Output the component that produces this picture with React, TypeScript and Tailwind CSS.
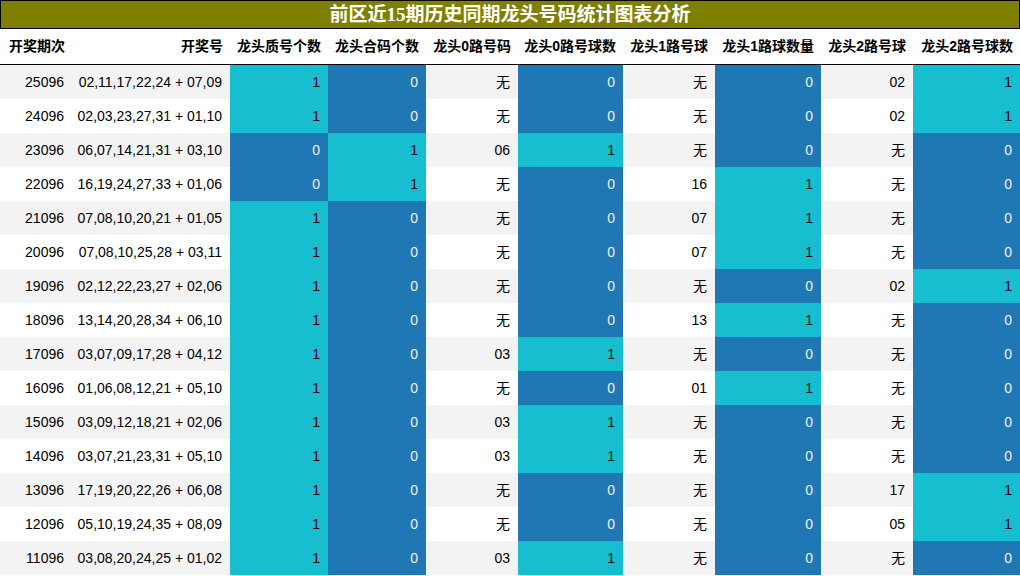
type Row = [string, string, number, number, string, number, string, number, string, number]

const rows: Row[] = [
  ['25096', '02,11,17,22,24 + 07,09', 1, 0, '无', 0, '无', 0, '02', 1],
  ['24096', '02,03,23,27,31 + 01,10', 1, 0, '无', 0, '无', 0, '02', 1],
  ['23096', '06,07,14,21,31 + 03,10', 0, 1, '06', 1, '无', 0, '无', 0],
  ['22096', '16,19,24,27,33 + 01,06', 0, 1, '无', 0, '16', 1, '无', 0],
  ['21096', '07,08,10,20,21 + 01,05', 1, 0, '无', 0, '07', 1, '无', 0],
  ['20096', '07,08,10,25,28 + 03,11', 1, 0, '无', 0, '07', 1, '无', 0],
  ['19096', '02,12,22,23,27 + 02,06', 1, 0, '无', 0, '无', 0, '02', 1],
  ['18096', '13,14,20,28,34 + 06,10', 1, 0, '无', 0, '13', 1, '无', 0],
  ['17096', '03,07,09,17,28 + 04,12', 1, 0, '03', 1, '无', 0, '无', 0],
  ['16096', '01,06,08,12,21 + 05,10', 1, 0, '无', 0, '01', 1, '无', 0],
  ['15096', '03,09,12,18,21 + 02,06', 1, 0, '03', 1, '无', 0, '无', 0],
  ['14096', '03,07,21,23,31 + 05,10', 1, 0, '03', 1, '无', 0, '无', 0],
  ['13096', '17,19,20,22,26 + 06,08', 1, 0, '无', 0, '无', 0, '17', 1],
  ['12096', '05,10,19,24,35 + 08,09', 1, 0, '无', 0, '无', 0, '05', 1],
  ['11096', '03,08,20,24,25 + 01,02', 1, 0, '03', 1, '无', 0, '无', 0],
]

const headers = ['开奖期次', '开奖号', '龙头质号个数', '龙头合码个数', '龙头0路号码', '龙头0路号球数', '龙头1路号球', '龙头1路球数量', '龙头2路号球', '龙头2路号球数']

const grid = 'grid grid-cols-[72px_158px_98px_98px_92px_105px_92px_106px_92px_107px]'

function Count({ v }: { v: number }) {
  return (
    <div
      className={
        v === 1
          ? 'flex items-center justify-end pr-[8px] bg-[#17becf] text-black'
          : 'flex items-center justify-end pr-[8px] bg-[#1f77b4] text-[#f1f1f1]'
      }
    >
      {v}
    </div>
  )
}

function Plain({ children }: { children: React.ReactNode }) {
  return <div className="flex items-center justify-end pr-[8px] text-black">{children}</div>
}

export default function App() {
  return (
    <div className="w-[1020px] h-[576px] bg-white overflow-hidden font-['Liberation_Sans','Noto_Sans_CJK_SC',sans-serif]">
      <div className="h-[29px] bg-[#808000] border border-black flex items-center justify-center">
        <span className="text-white font-bold text-[19px] leading-none font-['Liberation_Serif','Noto_Sans_CJK_SC',serif]">
          前区近15期历史同期龙头号码统计图表分析
        </span>
      </div>
      <div className={`${grid} h-[36px] border-b border-black text-[14px] font-bold text-black`}>
        {headers.map((h) => (
          <div key={h} className="flex items-center justify-end pr-[7px] whitespace-nowrap">
            {h}
          </div>
        ))}
      </div>
      {rows.map((r, i) => (
        <div key={r[0]} className={`${grid} h-[34px] text-[14px] ${i % 2 === 0 ? 'bg-[#f3f3f3]' : 'bg-white'}`}>
          <Plain>{r[0]}</Plain>
          <Plain>{r[1]}</Plain>
          <Count v={r[2]} />
          <Count v={r[3]} />
          <Plain>{r[4]}</Plain>
          <Count v={r[5]} />
          <Plain>{r[6]}</Plain>
          <Count v={r[7]} />
          <Plain>{r[8]}</Plain>
          <Count v={r[9]} />
        </div>
      ))}
    </div>
  )
}
